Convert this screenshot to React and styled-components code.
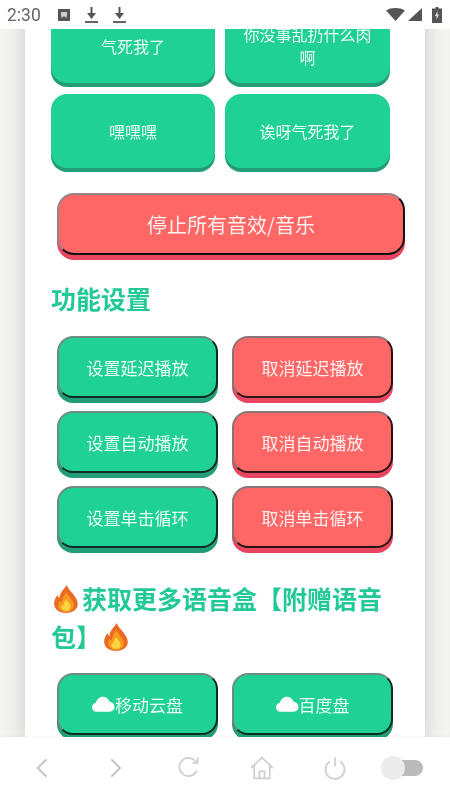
import React from 'react';
import styled, { createGlobalStyle } from 'styled-components';

const GREEN = '#20d196';
const GREEN_DARK = '#239d78';
const RED = '#ff6666';
const RED_DARK = '#ea4560';
const LABEL = 'rgba(255, 255, 255, 0.9)';

const soundButtons = ['气死我了', '你没事乱扔什么肉啊', '嘿嘿嘿', '诶呀气死我了'];

const settingRows = [
  ['设置延迟播放', '取消延迟播放'],
  ['设置自动播放', '取消自动播放'],
  ['设置单击循环', '取消单击循环'],
];

const Fire = ({ trailing }) => (
  <FireIcon viewBox="0 0 24 28" $trailing={trailing}>
    <path
      fill="#ea6a24"
      d="M13 0c.5 3.500 4 6 6.500 9.500C22.500 13.500 24.500 17 23.500 21c-1 4-5.500 7-11.500 7S1.500 25 .5 21c-1-4 .5-8 3-11 .3 1.500 1 2.500 2 3C5.500 8.500 9 5 13 0z"
    />
    <path
      fill="#f89a1e"
      d="M12.500 7c.5 3 3.500 5 5.500 8 2 3 2.500 6 1 8.500-1.300 2-3.700 3.500-7 3.500s-5.800-1.500-7-3.500c-1.300-2.500-.8-5.500 1-8 .4 1.200 1 1.800 1.800 2.200C8 14 9.500 10.500 12.500 7z"
    />
    <path
      fill="#fdd33f"
      d="M12.500 14c.5 2 2.500 3.500 3.500 5.500 1 2 .7 3.700-.4 5-.9 1-2.100 1.500-3.600 1.500s-2.800-.6-3.700-1.700c-1-1.400-1-3.200-.2-4.700.4.600.8 1 1.400 1.300-.2-2.200.9-4.600 3-6.900z"
    />
  </FireIcon>
);

const Cloud = () => (
  <CloudIcon viewBox="0 0 24 16">
    <path
      fill="#ffffff"
      d="M5 16C2.200 16 0 13.900 0 11.300 0 8.900 1.800 7 4.200 6.700 5 3 7.900.5 11.400.5c3.200 0 6 2.100 7 5.200 2.900.3 5.100 2.600 5.100 5.400 0 2.700-2.300 4.900-5.200 4.900H5z"
    />
  </CloudIcon>
);

const App = () => {
  return (
    <Phone>
      <GlobalStyle />
      <StatusBar>
        <StatusLeft>
          <Time>2:30</Time>
          <svg width="12" height="12" viewBox="0 0 12 12">
            <path fill="#555" d="M0 0h12v12H0z" />
            <path fill="#ccc" d="M3 3h6v4l-1 2-2-2-2 2-1-2z" />
          </svg>
          <DownloadIcon />
          <DownloadIcon />
        </StatusLeft>
        <StatusRight>
          <svg width="19" height="13" viewBox="0 0 19 13">
            <path fill="#555" d="M0 2.500C2.500.8 5.800 0 9.500 0s7 .8 9.500 2.500L9.500 13z" />
          </svg>
          <SignalIcon width="14" height="13" viewBox="0 0 14 13">
            <path fill="#555" d="M14 0v13H0z" />
          </SignalIcon>
          <svg width="10" height="16" viewBox="0 0 10 16">
            <path fill="#555" d="M3.500 0h3v1.500H10V16H0V1.500h3.500z" />
            <path fill="#ddd" d="M5.500 4L3 9h1.500v3.500L7 7.500H5.500z" />
          </svg>
        </StatusRight>
      </StatusBar>

      <Viewport>
        <Panel>
          <SoundGrid>
            {soundButtons.map((label) => (
              <SoundButton key={label}>{label}</SoundButton>
            ))}
          </SoundGrid>

          <StopButton>停止所有音效/音乐</StopButton>

          <Heading>功能设置</Heading>
          <SettingGrid>
            {settingRows.map(([on, off]) => (
              <React.Fragment key={on}>
                <ActionButton>{on}</ActionButton>
                <ActionButton $danger>{off}</ActionButton>
              </React.Fragment>
            ))}
          </SettingGrid>

          <MoreHeading>
            <Fire />获取更多语音盒【附赠语音包】 <Fire trailing />
          </MoreHeading>
          <SettingGrid>
            <ActionButton><Cloud />移动云盘</ActionButton>
            <ActionButton><Cloud />百度盘</ActionButton>
          </SettingGrid>
        </Panel>
      </Viewport>

      <BottomNav>
        <NavItem>
          <NavIcon viewBox="0 0 30 30">
            <path d="M19 5L9 15l10 10" />
          </NavIcon>
        </NavItem>
        <NavItem>
          <NavIcon viewBox="0 0 30 30">
            <path d="M9.500 5l10 10-10 10" />
          </NavIcon>
        </NavItem>
        <NavItem>
          <NavIcon viewBox="0 0 30 30" $light>
            <path d="M24 18a10.500 10.500 0 1 1-2-11.500L25 9" />
            <path d="M25 3v6h-6" />
          </NavIcon>
        </NavItem>
        <NavItem>
          <NavIcon viewBox="0 0 30 30" $light>
            <path d="M2.500 15L15 3l12.500 12" />
            <path d="M6 12.500V27h18V12.500" />
            <path d="M12 27v-8h6v8" />
          </NavIcon>
        </NavItem>
        <NavItem>
          <NavIcon viewBox="0 0 30 30" $light>
            <path d="M9 7.500a11 11 0 1 0 12 0" />
            <path d="M15 2.500v11" />
          </NavIcon>
        </NavItem>
        <NavItem>
          <Toggle>
            <ToggleKnob />
          </Toggle>
        </NavItem>
      </BottomNav>
    </Phone>
  );
};

export default App;

const DownloadIcon = () => (
  <svg width="13" height="16" viewBox="0 0 13 16">
    <path fill="#555" d="M5.500 0h2v6H11l-4.500 6L2 6h3.500z" />
    <path fill="#666" d="M0 14h13v2H0z" />
  </svg>
);

const GlobalStyle = createGlobalStyle`
  html, body {
    margin: 0;
    padding: 0;
    background: #fff;
  }

  * {
    box-sizing: border-box;
  }
`;

const Phone = styled.div`
  width: 450px;
  height: 800px;
  display: flex;
  flex-direction: column;
  overflow: hidden;
  font-family: "Noto Sans CJK SC", "Noto Sans", sans-serif;
  filter: blur(0.6px);
`;

const StatusBar = styled.div`
  height: 29px;
  flex-shrink: 0;
  display: flex;
  align-items: center;
  justify-content: space-between;
  padding: 0 8px 0 7px;
  background: #fff;
`;

const StatusLeft = styled.div`
  display: flex;
  align-items: center;
  gap: 15px;
`;

const StatusRight = styled.div`
  display: flex;
  align-items: center;
  gap: 3px;
`;

const SignalIcon = styled.svg`
  margin-right: 7px;
`;

const Time = styled.span`
  font-family: Roboto, sans-serif;
  font-size: 17.500px;
  color: #666;
  margin-right: 2px;
`;

const Viewport = styled.div`
  flex: 1;
  min-height: 0;
  overflow: hidden;
  padding: 0 25px;
  background: #f3f4f0;
`;

const Panel = styled.div`
  margin-top: -20px;
  padding: 0 20px 0 26px;
  background: #fff;
  box-shadow: 0 0 20px rgba(0, 0, 0, 0.17);
`;

const SoundGrid = styled.div`
  display: grid;
  grid-template-columns: 164px 165px;
  gap: 7px 10px;
`;

const SoundButton = styled.button`
  height: 74px;
  margin-bottom: 4px;
  padding: 0 14px;
  border: none;
  border-radius: 16px;
  background: ${GREEN};
  box-shadow: 0 4px 0 ${GREEN_DARK};
  color: ${LABEL};
  font-family: inherit;
  font-size: 16px;
  line-height: 23px;
`;

const StopButton = styled.button`
  display: block;
  width: 348px;
  height: 62px;
  margin: 21px 0 0 6px;
  border: 2px solid;
  border-color: #978486 #111 #111 #978486;
  border-radius: 17px;
  background: ${RED};
  box-shadow: 0 5px 0 ${RED_DARK};
  color: ${LABEL};
  font-family: inherit;
  font-size: 20px;
`;

const Heading = styled.h2`
  margin: 24px 0 0;
  color: #22c997;
  font-size: 25px;
  font-weight: 700;
  line-height: 38px;
`;

const MoreHeading = styled(Heading)`
  margin: 26px 0 -1px;
`;

const SettingGrid = styled.div`
  display: grid;
  grid-template-columns: 161px 161px;
  gap: 8px 14px;
  margin: 19px 0 0 6px;
`;

const ActionButton = styled.button`
  display: flex;
  align-items: center;
  justify-content: center;
  height: 62px;
  margin-bottom: 5px;
  padding: 0;
  border: 2px solid;
  border-color: ${({ $danger }) => ($danger ? '#8a7476 #2a1414 #2a1414 #8a7476' : '#6f8a80 #0d2c22 #0d2c22 #6f8a80')};
  border-radius: 16px;
  background: ${({ $danger }) => ($danger ? RED : GREEN)};
  box-shadow: 0 5px 0 ${({ $danger }) => ($danger ? RED_DARK : GREEN_DARK)};
  color: ${LABEL};
  font-family: inherit;
  font-size: 17px;
`;

const FireIcon = styled.svg`
  display: inline-block;
  width: 24px;
  height: 28px;
  margin: 0 4px 0 ${({ $trailing }) => ($trailing ? '-3px' : '3px')};
  vertical-align: -4px;
`;

const CloudIcon = styled.svg`
  width: 23px;
  height: 16px;
  flex-shrink: 0;
`;

const BottomNav = styled.div`
  position: relative;
  height: 63px;
  flex-shrink: 0;
  display: grid;
  grid-template-columns: repeat(5, 73px) 1fr;
  padding: 0 17px 0 6px;
  background: #fff;
  box-shadow: 0 -1px 3px rgba(0, 0, 0, 0.04);
`;

const NavItem = styled.div`
  display: flex;
  align-items: center;
  justify-content: center;
  padding-bottom: 1px;
`;

const NavIcon = styled.svg`
  width: 26px;
  height: 26px;
  fill: none;
  stroke: ${({ $light }) => ($light ? '#cfcfcf' : '#bdbdbd')};
  stroke-width: 2;
`;

const Toggle = styled.div`
  position: relative;
  width: 42px;
  height: 16px;
  border-radius: 8px;
  background: linear-gradient(to right, transparent 11px, #bbb 11px);
`;

const ToggleKnob = styled.div`
  position: absolute;
  left: 0;
  top: -4px;
  width: 24px;
  height: 24px;
  border-radius: 50%;
  background: #ebebeb;
`;
